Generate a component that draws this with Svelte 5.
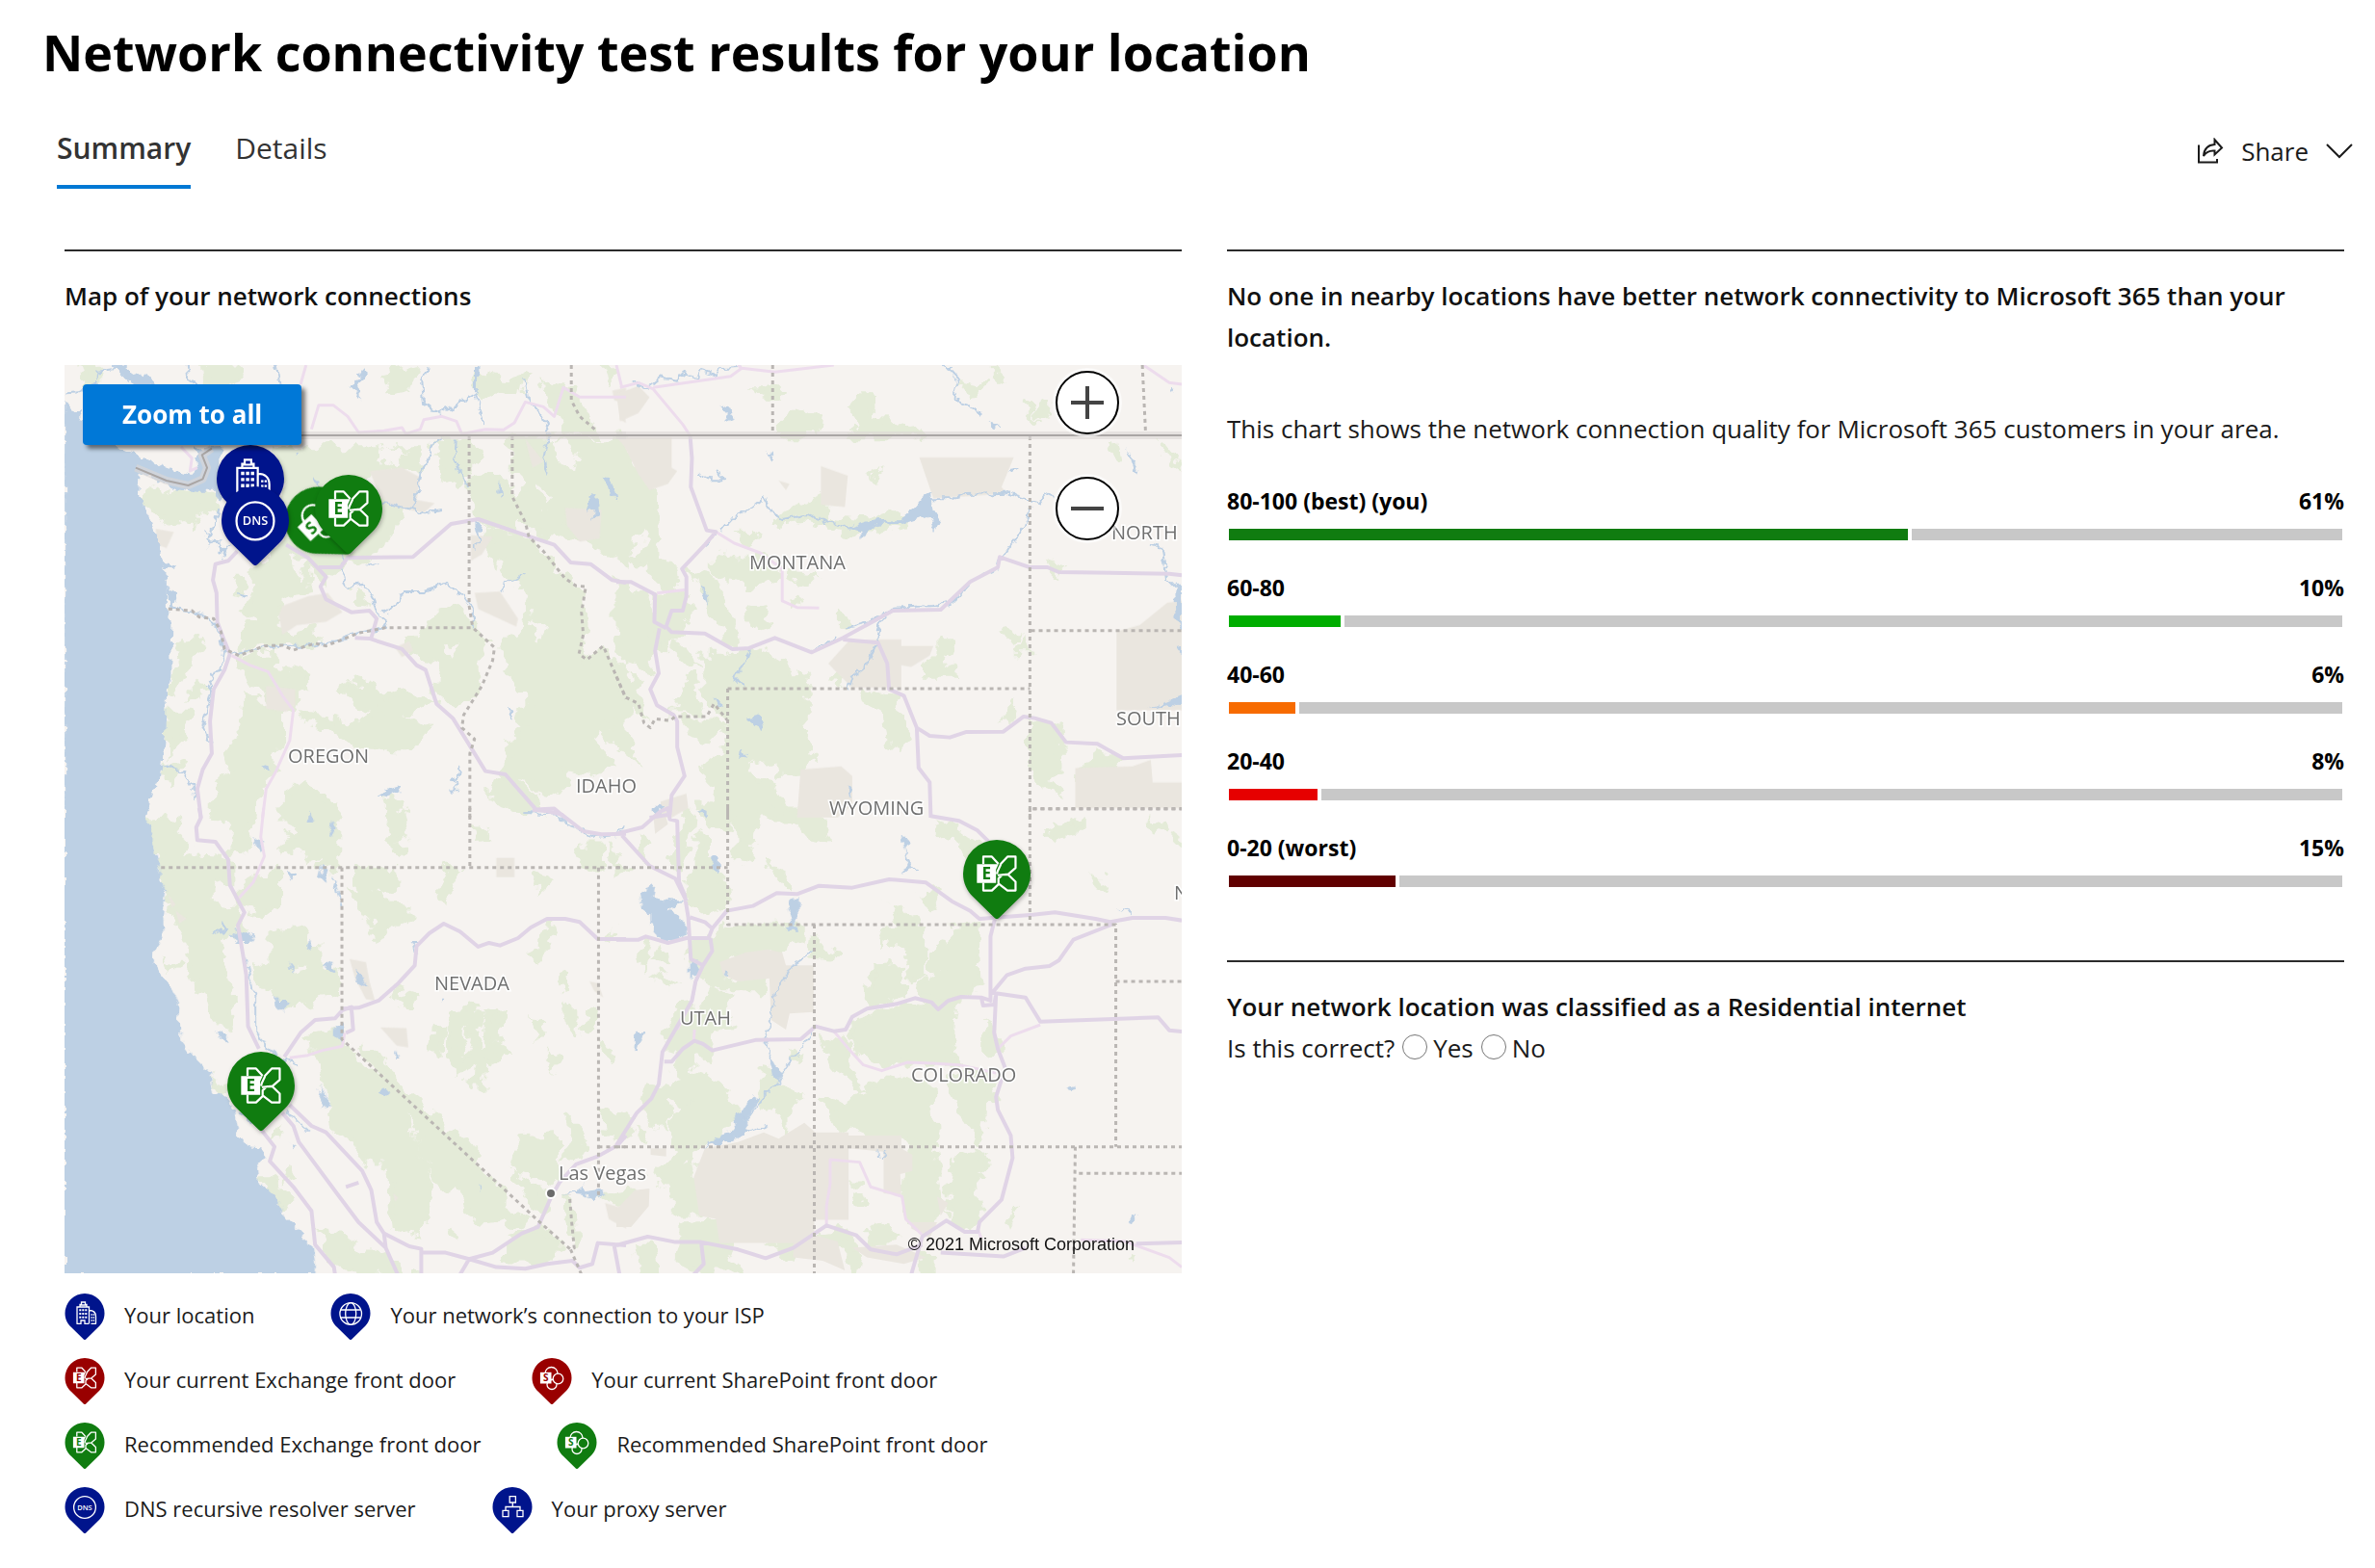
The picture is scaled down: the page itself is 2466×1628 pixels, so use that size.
<script>
  const buckets = [
    { label: '80-100 (best) (you)', value: 61, color: '#107c10' },
    { label: '60-80', value: 10, color: '#00ad00' },
    { label: '40-60', value: 6, color: '#f76b00' },
    { label: '20-40', value: 8, color: '#e60000' },
    { label: '0-20 (worst)', value: 15, color: '#610000' },
  ];

  const blue = '#00148c';
  const red = '#990000';
  const green = '#107c10';

  const legend = [
    [
      { kind: 'building', color: blue, text: 'Your location' },
      { kind: 'globe', color: blue, text: 'Your network’s connection to your ISP' },
    ],
    [
      { kind: 'exchange', color: red, text: 'Your current Exchange front door' },
      { kind: 'sharepoint', color: red, text: 'Your current SharePoint front door' },
    ],
    [
      { kind: 'exchange', color: green, text: 'Recommended Exchange front door' },
      { kind: 'sharepoint', color: green, text: 'Recommended SharePoint front door' },
    ],
    [
      { kind: 'dns', color: blue, text: 'DNS recursive resolver server' },
      { kind: 'proxy', color: blue, text: 'Your proxy server' },
    ],
  ];

  // x, y is the point on the map that the tip of the pin marks
  const pins = [
    { kind: 'sharepoint', color: green, x: 295, y: 195, turn: -43 },
    { kind: 'exchange', color: green, x: 295, y: 195, turn: 0 },
    { kind: 'building', color: blue, x: 193, y: 164, turn: 0 },
    { kind: 'dns', color: blue, x: 198, y: 207, turn: 0 },
    { kind: 'exchange', color: green, x: 204, y: 794, turn: 0 },
    { kind: 'exchange', color: green, x: 968, y: 574, turn: 0 },
  ];

  const places = [
    { name: 'MONTANA', x: 711, y: 212 },
    { name: 'NORTH', x: 1087, y: 181 },
    { name: 'SOUTH', x: 1092, y: 374 },
    { name: 'OREGON', x: 232, y: 413 },
    { name: 'IDAHO', x: 531, y: 444 },
    { name: 'WYOMING', x: 794, y: 467 },
    { name: 'NEVADA', x: 384, y: 649 },
    { name: 'UTAH', x: 639, y: 685 },
    { name: 'COLORADO', x: 879, y: 744 },
    { name: 'N', x: 1152, y: 555 },
    { name: 'Las Vegas', x: 513, y: 846 },
  ];

  // Each tile keeps its own coordinate space, placed on the map by its matrix
  const tiles = [
    {
      matrix: 'matrix(0.3763 0 0 0.3333 -7 -10)',
      woods: [
        'M65 40H110L100 90L80 100ZM395 30H490L500 70L450 90L400 80ZM250 420L290 430L350 415L440 440L445 490L400 480L380 520L330 500L320 530L270 500L245 440Z',
        'M600 290H1000L1000 350L860 360L850 400L900 450L960 460L880 620L800 640L740 700L690 650L680 740L610 760L600 830L640 870L700 850L720 880L640 905L560 900L500 930L515 860L560 820L520 790L550 740L545 660L620 600L630 400Z',
        'M490 700L512 700L512 730L485 725ZM820 735L855 770L810 760ZM350 890L390 890L370 950L340 1000L310 1060L320 980ZM370 1040L400 1045L360 1070ZM300 1120L370 1120L350 1180L310 1230L300 1160ZM300 1260L340 1280L310 1320Z',
        'M500 940L600 930L590 970L640 980L690 990L690 1030L660 1050L650 1100L600 1110L560 1030L520 1020ZM520 1070L610 1110L610 1200L590 1220L600 1290L560 1340L540 1440L430 1440L440 1330L480 1270L470 1200L510 1170Z',
        'M680 1120L760 1130L830 1150L880 1110L960 1130L1010 1170L980 1220L900 1220L830 1210L780 1180L700 1150ZM785 1040L850 1020L890 1040L900 1070L960 1050L1030 1080L970 1110L900 1110L840 1090ZM620 1380L680 1330L740 1390L780 1440H620ZM910 1380L940 1400L920 1440Z',
        'M940 920L1000 880L1040 800L1100 790L1140 840L1190 900L1150 970L1160 1040L1090 1090L1040 1040L1060 960L1000 930L960 900ZM1040 280L1110 280L1100 330L1130 360L1100 400L1060 380ZM1070 260L1140 260L1160 330L1120 350ZM900 60L980 40L970 100L920 110ZM1150 60L1240 80L1290 60L1280 110L1220 100L1170 140Z',
        'M1140 380L1220 370L1250 430L1280 510L1260 540L1180 520L1150 470ZM1180 600L1200 580L1190 540L1270 560L1330 600L1380 680L1440 730L1450 850L1440 930L1470 950L1500 910L1530 960L1568 1100L1568 1240L1500 1150L1480 1200L1530 1270L1480 1310L1400 1290L1410 1340L1340 1370L1290 1320L1240 1300L1250 1200L1300 1150L1270 1120L1310 1070L1240 990L1230 900L1290 850L1300 740L1230 690L1220 640Z',
        'M1250 260L1568 260L1568 660L1500 600L1450 580L1400 530L1350 570L1300 530L1270 470L1290 400L1260 350ZM1200 1320L1250 1310L1310 1370L1330 1420L1270 1410L1190 1380ZM1350 90L1420 110L1460 190L1480 240L1400 240L1370 160ZM1500 30L1540 60L1520 80Z',
      ],
      sands: [
        'M860 360L950 350L1000 380L990 450L1040 460L1010 490L920 470L890 440ZM620 780L690 750L745 740L785 800L740 830L660 840L620 870L610 810ZM270 540L320 550L300 600L275 590ZM1150 740L1220 735L1270 820L1265 845L1160 790ZM1400 475L1500 480L1495 570L1440 580L1405 530ZM1140 560L1200 565L1170 620L1140 640ZM575 1030L655 1040L655 1090L630 1110L575 1100ZM930 910L970 890L980 920L950 940ZM1530 110L1568 100L1568 150L1535 140Z',
        'M1290 260L1340 330L1310 350ZM1560 160L1568 210L1550 200Z',
      ],
      clearings: ['M1480 680L1500 660L1520 740L1510 840L1490 880L1450 900L1460 780ZM1060 900L1110 910L1080 950ZM1380 250L1440 300L1430 370L1370 330ZM1320 400L1360 440L1340 480ZM640 620L690 640L660 700ZM1300 820L1340 850L1320 900ZM900 280L960 300L930 340L890 320Z'],
      waters: [
        'M19 140L40 175L70 165L60 200L130 255L175 295L215 320L225 360L222 420L240 470L255 510L270 555L290 640L300 700L300 780L315 830L312 930L312 1000L300 1060L297 1150L290 1250L285 1310L260 1360L245 1440H19Z',
        'M160 290L200 300L260 330L300 350L365 375L390 345L378 290L450 285L450 450L430 425L390 425L330 415L290 395L225 365Z',
        'M150 30L180 30L230 70L250 60L270 90L240 95L195 80ZM1148 30H1160L1158 120L1148 110ZM845 35L850 60L828 105L835 140L812 100L825 80ZM1470 440L1485 430L1492 500L1475 515L1480 480L1460 490ZM1505 380L1525 385L1545 455L1515 415ZM285 640L325 655L300 670ZM300 720L330 745L320 780L345 800L310 790ZM850 650L885 645L870 658ZM1220 390L1225 440L1212 430ZM500 740L522 750L512 758ZM560 1285L580 1270L585 1295ZM880 1370L910 1350L940 1340L945 1360L910 1375ZM1245 1085L1255 1110L1250 1135ZM405 540L420 575L410 605L420 560ZM440 590L470 600L460 630ZM1150 520L1170 530L1160 570ZM1350 330L1352 345L1345 370L1338 350Z',
      ],
      rivers: [
        'M105 90L110 50L170 40M105 90L60 115L20 118M355 30L360 70L400 110M600 30L613 90M705 380L720 410M1060 255L1030 280L1020 330L1000 370L990 440L975 480L930 465L895 455M975 480L1010 490L1060 480M1020 40L1005 80L1010 150L1045 180L1090 160L1150 120L1180 215M1290 70L1300 140L1340 190L1355 245L1340 320L1345 360',
        'M660 300L662 310M1100 260L1095 330L1120 390L1135 410M785 615L785 690L795 720L845 710L870 760L880 800L910 830L900 850L830 865L780 885L700 905L640 905L570 905L500 930L460 920L450 870L420 815L370 800L320 790M900 800L930 780L955 735L1010 735L1075 712L1120 750L1145 790L1145 850M1225 740L1230 705L1260 700L1295 675M460 920L450 980L430 990L415 1020L425 1050L400 1150L420 1210M290 1275L350 1300L375 1350L378 1380M1110 1280L1105 1310L1085 1325L1105 1330L1100 1355L1080 1355M445 480L420 560L410 575L445 580L460 620L480 590M1160 520L1165 580L1150 600',
      ],
      pinks: ['M685 30L670 90M700 230L720 155L760 155L800 190L830 240L900 235L950 225L960 245L1000 230L1010 200L1060 190L1100 205L1115 245L1180 230L1230 232L1260 210L1290 145L1340 160L1370 190L1395 100L1440 130L1568 130M340 285L370 320L365 360L385 350M480 935L530 965L580 985L620 1060L650 1105L640 1200L600 1300L575 1350L565 1440'],
      highways: ['M495 610L470 640L435 650L428 700L438 740L440 830L460 890L475 930L460 980L430 1040L420 1140L425 1240L400 1290L385 1350L395 1440M630 590L690 630L740 690L725 720L740 760L810 800L860 795L880 820L865 880M720 660H780L800 630L980 628L1085 525L1160 510L1290 560L1370 590L1415 645L1470 650L1530 700L1568 708M820 880L860 882L950 915L990 965L1015 980L1045 1085L1090 1130L1180 1295L1235 1305L1320 1415L1370 1412L1400 1440'],
      borders: ['M305 790L370 795L390 815L430 820L450 860L460 915L500 935L570 905L620 903L650 918L710 897L740 905L830 865L905 848H1145L1205 910L1200 950L1170 1030L1120 1120L1115 1160L1150 1195L1137 1240V1440M1135 252V780L1145 848M1254 252V440L1290 520L1300 565L1340 610L1400 695L1430 718L1457 720L1445 800L1450 870L1438 930L1460 948L1505 905L1568 1070M1417 30V140L1440 190L1487 235'],
      frontiers: ['M520 249H1568M215 350L300 390L360 405L400 385L412 350L398 310L425 290'],
    },
    {
      matrix: 'matrix(0.3827 0 0 0.3333 573 -10)',
      woods: [
        'M0 255L20 280L60 380L105 430L110 630L60 650L0 600ZM85 640L160 650L165 700L150 730L110 700L90 670ZM270 625L330 635L410 640L440 680L380 720L340 710L270 680ZM470 680L540 690L520 710L480 705ZM200 670L250 680L290 760L320 850L325 900L300 890L260 780L210 700ZM360 790L400 785L410 850L380 860L355 810ZM340 560L360 545L380 560L360 575ZM690 370L710 365L705 380Z',
        'M505 460L550 440L580 480L570 510L660 520L690 530L740 510L780 490L800 500L760 525L690 545L620 545L560 525L500 510L450 515L440 550L435 510L480 490ZM440 230L490 175L550 190L540 245L440 245ZM640 230L680 235L660 200L640 170L680 120L700 130L690 200L730 210L780 205L780 230L830 225L830 245L640 245ZM380 110L450 110L440 130L400 130ZM1020 40L1045 70L1020 70ZM950 90L990 100L970 120ZM1100 150L1130 160L1135 190ZM1150 140L1170 145L1170 190L1150 180ZM1350 260L1360 320L1340 310ZM1480 260L1500 320L1534 345L1534 350L1500 320ZM0 700L80 750L100 840L90 980L30 960L0 850ZM110 760L190 740L200 800L185 850L130 910L100 900ZM165 890L210 950L180 950Z',
        'M240 940L300 940L360 920L420 940L510 1000L510 1130L520 1240L540 1260L490 1300L430 1300L420 1270L360 1270L350 1310L430 1330L460 1440L240 1440L290 1330L250 1330L240 1280L300 1230L300 1120L260 1100L240 1040ZM200 1000L230 1110L160 1110L170 1040ZM0 1130L50 1240L60 1270L0 1220ZM180 1130L290 1150L260 1190L180 1170ZM0 950L60 1030L80 1130L20 1060ZM660 1040L730 1060L790 1120L790 1180L770 1220L740 1210L730 1120L670 1080ZM870 890L910 890L890 950L915 1000L840 1000L840 960L870 940ZM1060 870L1080 860L1075 890ZM1100 880L1120 920L1090 920ZM1075 1080L1085 1110L1070 1140L1045 1130ZM1125 1140L1200 1170L1205 1300L1160 1320L1195 1360L1160 1350L1125 1300ZM1310 1240L1370 1260L1340 1300L1250 1320L1260 1285L1300 1270ZM610 800L630 810L625 850L610 840ZM590 1000L620 1000L610 1020L585 1010ZM480 760L495 770L485 785ZM1170 650L1210 660L1190 680Z',
      ],
      sands: ['M0 255H150L150 350L165 360L140 400L90 420L60 370L20 280ZM822 318H1078L1045 410L1060 430L860 445ZM555 345L628 375L620 472L555 465ZM710 885H773V905H860L850 935L800 970L773 965V1035L640 1035L600 990L575 960L630 890ZM1357 860L1420 840L1495 770L1534 765V1105L1357 1105ZM1245 1285L1400 1280L1450 1260L1455 1330H1534V1410H1245ZM500 1290L610 1280L640 1310L640 1400L600 1440H490ZM0 120L60 95L90 130L60 180L10 205ZM120 1390L190 1365L195 1410L150 1440H120ZM440 390L470 400L460 420Z'],
      clearings: ['M360 1280L400 1265L420 1290L390 1300ZM30 620L80 600L80 560L50 590Z'],
      waters: ['M830 440L855 425L860 480L878 515L865 550L850 500L830 505L790 520L720 525L690 535L665 580L665 545L620 540L690 515L770 510L800 480ZM280 155L310 170L325 195L295 210L305 185ZM355 1130L390 1120L400 1170L375 1155ZM340 1220L355 1250L335 1258ZM230 715L245 745L248 780L232 750ZM265 1065L295 1095L275 1090ZM630 1340L645 1350L635 1380ZM405 290L432 325L425 333ZM1060 355L1090 350L1080 362ZM95 1420L115 1400L125 1425L110 1435ZM230 1415L245 1430L240 1440ZM1490 1080L1534 1060V1090L1500 1085L1440 1100ZM1385 290L1415 350L1412 375ZM1500 98L1516 103L1507 115ZM1510 910L1534 905V930ZM885 30L912 30L908 45ZM1515 710H1534V860L1520 820ZM1010 210L1040 220L1025 228Z'],
      rivers: ['M280 550L320 500L350 490L400 445L420 490L450 510L520 495L570 520L660 545M855 445L920 445L950 432L1060 428L1145 460L1165 430L1185 440M1125 470L1105 540L1075 580L1040 640L1035 665L960 705L910 770L860 780L750 785L730 810L715 830L705 900L680 965L640 1000L630 1040M620 850L690 830L730 800M360 920L345 965L320 1000L345 1035M905 40L925 65L912 120L940 155L965 165L985 180M340 35L280 40L270 60L230 45L220 70L175 55L165 80L120 70L80 105L40 75M1450 590L1480 600L1495 700L1530 740M225 370L250 385L290 385L280 360M240 590L270 560M530 920L600 880'],
      pinks: ['M10 100L60 85L100 105L180 215L200 250M100 100L310 65L340 40L430 52L590 30M340 40L330 30M0 30L15 100M1430 30L1500 85L1534 90M270 550L320 585L390 615L450 665V765L490 785L550 787M190 730L110 740'],
      highways: ['M200 250L205 320L202 410L245 545L270 550L240 590L178 665L190 690V750L180 795H150L135 845L150 862L240 866L315 915L360 912L430 880L530 925L615 880L750 795L880 792L960 705L1035 660L1040 628L1120 660H1170L1200 675L1500 680L1534 685M0 706H40L105 745L103 830L135 850M117 850L105 920L115 990L92 1040L110 1090L155 1120L165 1140V1220L185 1310L150 1370L145 1430L90 1440M615 885L710 895L735 960L740 1040L780 1060L815 1160L850 1185L905 1190L950 1173L1050 1172L1105 1125L1135 1130L1180 1145L1220 1205L1305 1210L1375 1255L1534 1245M815 1160L820 1285L850 1330L853 1440'],
      borders: ['M424 30V245M1427 30L1436 245M1122 252V1440M1125 857H1534M302 1038H1122M302 1038V1440M1130 1412H1534M0 1000L25 1065L60 1085L75 1145L92 1160L105 1132L145 1138L160 1125H245L265 1085L300 1135'],
      frontiers: ['M0 249H1534'],
    },
    {
      matrix: 'matrix(0.3763 0 0 0.3333 -7 460)',
      woods: [
        'M260 35L325 32L330 80L365 110L340 140L340 175H280L265 110ZM280 190L370 155L470 160L470 240L420 250L430 300L490 310L510 370L440 400L450 460L470 520L480 690L430 660L410 580L370 540L355 470L360 420L330 350L310 270L290 240ZM430 0H540L520 60L515 130L485 135L490 50L420 40ZM620 0H770L770 185H720L730 130L690 160L680 130L630 140L620 110L660 50ZM910 0H940L960 80L930 130Z',
        'M500 260L530 230L610 195L610 300L560 320L500 300ZM590 390L680 375L700 450L720 440L720 490L770 520L775 570L700 600L620 620L590 600L600 550L550 540L540 500L590 480ZM820 190H935V250H850L820 220ZM805 260L870 260L900 290L970 295L970 330L930 370L870 405L865 350L830 290ZM1070 180L1105 195L1060 295L1050 280ZM1150 60L1200 80L1160 85ZM1440 120L1500 120L1500 180H1455ZM1530 120L1550 130L1530 190ZM1330 210L1360 220L1325 250ZM1360 360L1370 390L1330 440L1325 475L1310 460ZM1510 400L1540 380L1520 410Z',
        'M685 715L785 690L780 740L700 750ZM710 765L800 750L840 800L900 870L960 900L980 980L1000 1070L1030 1180L1010 1270L1000 1320L930 1310L920 1150L900 1110L870 1110L830 1040L760 1000L740 900L730 800ZM850 760L910 790L950 880L1040 960L1110 1040L1155 1060L1150 1120L1200 1160L1220 1210L1220 1280L1150 1285L1110 1190L1050 1170L1000 1050L970 950L900 850ZM1130 610L1155 620L1100 750L1130 810L1070 760L1070 690ZM1150 650L1175 650L1150 780L1140 870L1175 870L1180 780L1240 765L1210 720L1220 650L1190 640L1185 740L1120 810ZM940 570L985 590L965 635ZM1040 680L1055 690L1045 750L1030 750Z',
        'M1320 660L1340 670L1330 720ZM1400 620L1430 650L1420 710ZM1470 620L1480 670L1455 680ZM1360 760L1385 770L1370 810ZM1510 750L1530 760L1520 780ZM1390 520L1405 530L1395 560ZM1268 1025L1375 1020L1375 1165L1290 1130L1268 1130ZM1260 1140L1350 1200L1340 1260L1280 1210ZM1400 950L1440 1000L1460 1060L1400 1090L1420 1030ZM1500 940L1568 960V1010L1510 1020ZM1500 1200L1568 1190V1240ZM1405 1200L1425 1280L1430 1370L1410 1300ZM1330 1310L1385 1350L1385 1410L1240 1410L1240 1340ZM1210 1260L1300 1280L1270 1310ZM730 1320L770 1330L820 1380L870 1380L960 1440L980 1453H860L810 1440L760 1410ZM560 1160L600 1160L650 1220L620 1240ZM590 1020L615 1000L620 1030ZM640 1130L650 1150L635 1155ZM1080 1310L1120 1350L1090 1340ZM300 480L325 490L310 500ZM300 290L320 340L300 320ZM430 840L480 890L440 880Z',
      ],
      sands: ['M805 470L850 480L860 540L875 600L850 595L820 530ZM890 683L962 685L967 745L935 740ZM1210 155H1260V215H1210ZM1467 540L1490 545L1505 590L1480 570ZM1510 1230L1568 1250V1310L1520 1280ZM325 320L355 345L335 360ZM305 270L325 300L315 310ZM925 1200L940 1215L930 1225Z'],
      clearings: ['M960 950L980 980L1000 1070L1030 1180L1010 1110L985 1010ZM430 250L470 270L480 310L430 290ZM640 480L680 485L660 510Z'],
      waters: [
        'M19 0H252L243 35L260 80L265 120L282 185L280 225L298 260L290 340L295 390L280 420L268 440L262 480L285 520L315 560L335 610L330 650L345 730L380 780L420 825L428 880L470 905L487 940L497 1020L525 1055L555 1060L570 1090L550 1120L555 1165L600 1215L630 1280L680 1330L680 1350L703 1360L710 1420L708 1453H19Z',
        'M820 500L840 520L850 565L825 545ZM765 680L788 675L785 725L765 710ZM733 165L745 180L735 230L722 215ZM755 40L768 60L757 85L750 70ZM695 10L705 45L690 45ZM535 90L570 110L555 135ZM635 200L660 205L645 225ZM760 215L772 240L765 255L755 245ZM725 490L755 475L765 515L740 505ZM440 695L465 705L472 735L445 715ZM455 350L470 375L455 400L430 385L455 380ZM490 375L540 400L530 420L500 420L480 400ZM600 580L615 600L640 600L620 635L605 620ZM690 410L705 425L688 440ZM880 885L900 870L915 885L900 900ZM728 860L738 900L752 920L738 940L715 880L728 890ZM935 745L942 780L930 780ZM640 1040L660 1050L650 1060ZM500 945L545 970L530 990ZM1395 1200L1430 1195L1450 1165L1455 1195L1500 1185L1515 1205L1480 1225L1450 1205ZM635 480L655 510L640 500ZM1062 590L1070 590L1062 612ZM1160 1170L1166 1180L1162 1195Z',
      ],
      rivers: ['M515 460L530 520L545 590L545 680L570 740L620 780L660 800M770 250L780 300M985 455L980 420L1000 420M1290 15L1380 20L1400 50L1450 70L1480 90L1540 85L1560 70M630 940L690 1010'],
      pinks: ['M568 0L560 90L570 150L540 230L500 280M640 778L690 770L730 755L785 742L792 700M1568 1020L1545 1050L1490 1085L1430 1110'],
      highways: ['M390 0L395 30L382 60L385 100L435 105L470 160L475 240L515 325L497 365L510 450L520 520L525 680L555 750M625 775L670 700L710 660L765 655L785 630L810 620L815 690L795 700M785 625L830 622L885 600L940 545L985 490L990 430L1025 390L1065 360L1110 385L1160 432L1190 420L1220 428L1270 405L1305 372L1350 345H1400L1440 355L1490 408H1568M1310 5L1350 10L1390 20L1450 72L1500 82L1568 80M560 1000L598 1055L585 1100L650 1180L700 1255L710 1360L762 1430L765 1453M620 950L650 990L665 1040L770 1200L830 1290L905 1370L938 1453M640 925L700 990L740 1010L840 1130L865 1190L880 1290L900 1325L970 1365L1003 1373L1003 1453M900 1325L905 1370M1003 1385L1070 1385L1135 1405L1200 1385L1280 1325L1325 1305L1362 1210L1385 1165L1430 1110L1490 1085L1545 1050L1568 1020M1110 1453L1135 1405L1210 1430L1290 1435L1350 1420L1420 1410L1440 1432L1475 1420L1490 1355L1568 1362M1535 1362L1550 1453M795 1180L830 1167'],
      borders: ['M285 185H1568M1137 0V185M784 185V720L1330 1290L1415 1375L1425 1370L1418 1290L1412 1205M1492 185V1205M1492 1055H1568M1415 1375L1445 1453'],
      frontiers: [],
    },
    {
      matrix: 'matrix(0.3827 0 0 0.3333 573 460)',
      woods: [
        'M320 0H390L370 60L360 165L325 150ZM230 0H300L300 60L240 50ZM430 0H530L575 50L570 95L520 85L490 40ZM180 10L200 20L190 130L170 180L150 170L170 100ZM225 80L260 100L260 200L300 230L290 310L240 320L195 280L190 220L225 190ZM60 90L80 100L75 155L55 140ZM0 190L30 195L0 210Z',
        'M290 370L510 370L510 410L460 430L430 445L330 460L280 500L300 540L410 530L400 560L340 560L270 560L240 520L210 480L200 430L260 400ZM90 410L75 480L65 450ZM120 440L135 480L100 470ZM115 525L155 540L130 550ZM170 620L230 610L260 570L310 590L290 640L310 680L260 700L240 780L180 760L150 750L140 700ZM150 860L180 850L250 830L300 880L330 980L240 1040L190 1090L240 1260L160 1260L160 1180L110 1160L120 1110L180 1080L150 1040L150 960L190 920L150 900ZM90 870L140 880L130 990L75 940ZM170 770L200 770L190 840L165 830ZM0 950L40 960L30 1020L0 1040ZM400 810L440 820L450 870L500 890L480 930L460 950L460 1020L430 950L400 910ZM60 990L90 1000L80 1045L60 1030Z',
        'M825 270L880 265L870 310L850 320ZM740 310L770 300L800 350L830 370L830 530L800 540L790 420L720 410L730 380H770ZM880 60L950 90L1000 130L990 200L930 110L890 80ZM910 370L980 365L985 550L930 590L900 600L820 590L830 550L880 510L850 500L850 450L870 420L910 430ZM695 495L775 490L775 580L720 605L675 590L675 560L695 555ZM540 390L550 450L600 460L580 465L530 460ZM640 670L720 640L840 600L920 600L910 720L920 790L850 800L790 780L740 800L700 780L640 740ZM560 720L620 730L640 830L660 860L600 830ZM480 750L500 770L480 790ZM900 830L960 820L1010 830L1030 900L1000 930L990 1040L940 970L920 920Z',
        'M560 900L640 920L680 870L780 830L850 870L860 1020L850 1060L790 1040L770 1020L680 1020L600 980L570 930ZM790 1050L860 1080L880 1200L890 1260L840 1310L800 1280L780 1180ZM920 1090L980 1070L1010 1100L970 1160L980 1260L960 1310L910 1280L900 1190ZM180 1295L270 1290L280 1360L300 1360L330 1440H200L170 1400L180 1340ZM60 1360L100 1360L110 1453L70 1440ZM430 1360L480 1360L470 1400ZM560 1330L620 1320L660 1380L650 1440L610 1380ZM680 1320L730 1300L750 1340L700 1370ZM640 1170L670 1170L640 1180ZM650 1210L680 1225L660 1220ZM1000 680L1030 700L1030 760L1000 740ZM1175 70L1255 40L1255 70L1190 85ZM1450 40L1490 45L1490 70L1455 65ZM1510 80L1534 90V105ZM1300 220L1340 235L1335 245L1305 235ZM420 180L450 200L460 240L440 220ZM820 1400L860 1400L860 1453L830 1453ZM1060 1285L1078 1272L1065 1300ZM1400 1400L1412 1412Z',
      ],
      sands: ['M280 480L350 450L410 440L450 450L460 490L535 490L535 635L470 640L460 690L420 660L415 530L330 540L290 520ZM240 1060L330 1040L400 1010L440 1030L510 980L540 1010H630V1020H773V1060L803 1080V1130L770 1140L773 1205L725 1200V1070L630 1060V1283H537V1330L600 1350L620 1440L560 1410L480 1400L480 1355H280L270 1280L225 1270L210 1150ZM0 1250L50 1190L90 1185L88 1240L40 1305H0ZM100 20L130 10L140 50L105 80ZM495 0H600L550 25ZM93 1060L135 1060L135 1085L93 1080ZM800 1290L870 1290L850 1340L800 1310ZM870 1210L900 1230L880 1270ZM640 1370L760 1360L840 1400L780 1420L680 1400Z'],
      clearings: ['M320 480L350 490L340 515L310 510Z'],
      waters: ['M65 260L90 240L105 250L100 280L150 290L180 290L140 320L165 330L195 375L180 405L150 415L105 400L108 370L92 365V325L70 315ZM470 290L495 280L495 345L482 370L495 380L460 380L475 360L462 310ZM775 90L795 95L785 125L800 185L775 210L790 170ZM262 150L275 155L280 185L270 210L262 180ZM200 480L218 475L222 515L200 535ZM50 698L74 700L58 755L48 760ZM290 505L305 510L298 525ZM320 960L340 950L370 895L385 905L350 975L355 1010L300 1040L235 1055L280 1020L325 1005ZM415 770L430 800L450 820L440 850L425 830ZM1360 310L1395 318V328ZM1218 872L1240 865L1253 875L1235 880ZM1400 1265L1415 1270L1395 1300L1390 1290ZM708 1060L712 1090L705 1085ZM95 0H130L100 25ZM225 5L245 15L240 35Z'],
      rivers: ['M535 445L480 490L430 580L420 650L405 720L420 790L440 850L400 900L345 980M540 690L510 740L470 790L440 840M340 1015L410 995M725 1070L735 1075L720 1095M0 70L20 60M140 285L180 290M780 190L820 185'],
      pinks: ['M210 725L212 690M235 490L215 540L205 600L165 690M590 695L630 750L670 800L720 818L790 792L860 795L930 800L1030 825M1150 675L1070 710L1035 750M570 1300V1240L580 1170V1095L660 1103L690 1180L775 1210L785 1280L830 1330M980 1310L990 1340M1260 1345L1380 1350L1500 1400L1534 1430'],
      highways: ['M0 80L70 60L120 10L140 0L145 35L165 40L170 230L185 270L195 340L202 470L235 490M15 85L90 180L160 220L190 290M200 340L240 355L260 375L300 320L370 305L435 265L490 268L550 242L640 248L740 222L840 232L910 290L960 320L985 345L1130 332L1190 325L1300 345L1340 355L1400 342H1490L1534 350M0 410H60L80 400L140 420L190 405H250L262 370M255 405L260 445L235 490L215 540L205 600L125 760L115 860L95 905L55 950L0 1050M130 790L150 790L180 750L212 725L235 735L260 755L380 722L500 720L540 680L590 695L622 690L640 650L680 625L760 610L810 592L855 605L873 627L900 600L935 588L990 590L1015 600L1015 400L1028 340M853 25L930 40L980 70L1015 110M1350 360L1240 410L1200 475L1175 492L1110 500L1060 520L1020 575L1110 590L1150 665L1470 652L1500 692L1534 696M990 590L995 615L1025 612L1030 580L1025 700L1035 750L1055 810L1030 900L1035 940L1070 1020L1075 1090L1045 1220L985 1290L980 1320L945 1320L895 1285L830 1335L800 1453M0 1362L85 1335L160 1352L230 1352L330 1375L405 1402L480 1370L570 1300L650 1330L690 1375L760 1390L830 1360M230 1352L237 1420L210 1453M880 1385L1050 1397L1110 1370M1410 1357L1534 1353'],
      borders: ['M302 0V363H1355V1055M0 185H302M537 363V1453M0 1055H1534M1122 0V363M1130 3H1534M1355 540H1534M1245 1055L1240 1453M1255 1138H1534'],
      frontiers: [],
    },
  ];
</script>

{#snippet pin(kind, color, x, y, width, height)}
  <svg class="pin" viewBox="0 0 41 48" {x} {y} {width} {height} fill="none" stroke="#fff" stroke-width="1.3" aria-hidden="true">
    <path
      d="M20.5 0A20.5 20.5 0 0 1 41 20.5C41 26.5 38.5 31 35 34.6L22 47.3a2.1 2.1 0 0 1-3 0L6 34.6C2.5 31 0 26.5 0 20.5A20.5 20.5 0 0 1 20.5 0Z"
      fill={color}
      stroke="none"
    />
    {#if kind === 'building'}
      <path d="M12.5 31.5V14h3v-2.500h1.500V9h4v2.500h1.500V14h2.500v17.500M15.500 14h8M12 31.300h4.500V28h4v3.300h4M25 17.500c4.500 0 7 2.500 7 6.500v7.500M27 31.300h5.500M15 12h7.500" />
      <path d="M14.800 17.300h8M14.800 21h8M14.800 24.700h8" stroke-width="2" stroke-dasharray="2 1" />
      <path d="M27 22h3.500M27 25h3.500M27 28h3.500" stroke-dasharray="1.400 0.700" />
    {:else if kind === 'globe'}
      <circle cx="20.700" cy="21" r="11.300" />
      <ellipse cx="20.700" cy="21" rx="5.500" ry="11.300" />
      <path d="M10.500 17h20.500M10.500 25h20.500" />
    {:else if kind === 'exchange'}
      <path d="M12.300 14.600V10.200H17.500L21.500 14.600M12.300 26V30.800H17.500L21.500 27M20.500 20.800C21 18 22.500 16.500 23 14.500L27 10.200H31.900V17L27.500 20.800L21 21.500M21.500 23.500L24 21.200L27.500 21.200L31.900 25.500V30.800H27L21.500 26.500Z" stroke-linejoin="round" />
      <path d="M8.400 14.800H21.500L20 18V26.200H8.400Z" fill="#fff" stroke="none" />
      <text x="14.200" y="24.200" fill={color} stroke="none" font-size="10" font-weight="700" text-anchor="middle">E</text>
    {:else if kind === 'sharepoint'}
      <circle cx="20" cy="16" r="6.500" />
      <circle cx="20.500" cy="27.500" r="5" />
      <circle cx="27" cy="21.500" r="5.300" fill={color} />
      <path d="M8.400 14.800H20V26.500H8.400Z" fill="#fff" stroke="none" />
      <text x="14.200" y="24.400" fill={color} stroke="none" font-size="10" font-weight="700" text-anchor="middle">S</text>
    {:else if kind === 'dns'}
      <circle cx="20.500" cy="21" r="11.400" />
      <text x="20.500" y="23.700" fill="#fff" stroke="none" font-size="7.500" font-weight="600" text-anchor="middle">DNS</text>
    {:else}
      <path d="M17.700 9.700H23.900V16H17.700ZM10.500 24.300H16.500V30.700H10.500ZM25.500 24.300H31.500V30.700H25.500ZM20.800 16V20.500M13.500 24V20.500H28.500V24" />
    {/if}
  </svg>
{/snippet}

<main>
  <h1>Network connectivity test results for your location</h1>

  <div class="bar">
    <nav aria-label="Result views">
      <a class="current" href="#summary" aria-current="page">Summary</a>
      <a href="#details">Details</a>
    </nav>
    <button class="share" type="button">
      <svg width="28" height="28" viewBox="0 0 28 28" fill="none" stroke="#1b1b1b" stroke-width="2" aria-hidden="true">
        <path d="M2 7.500V25.500H21V22" />
        <path d="M18.500 2L26 10.500L18.500 17.500V13.500C13 13 9.500 15 7 19C7.500 11.500 11.500 7.500 18.500 7Z" />
      </svg>
      <span>Share</span>
      <svg width="28" height="16" viewBox="0 0 28 16" fill="none" stroke="#1b1b1b" stroke-width="2" aria-hidden="true">
        <path d="M1 1L14 14L27 1" />
      </svg>
    </button>
  </div>

  <div class="columns">
    <section class="panel" id="summary">
      <h2>Map of your network connections</h2>
      <div class="map">
        <svg class="terrain" viewBox="0 0 1160 943" preserveAspectRatio="xMidYMid slice" role="img" aria-label="Map of the western United States">
          <defs>
            <filter id="rugged" x="0" y="0" width="100%" height="100%" filterUnits="userSpaceOnUse" color-interpolation-filters="sRGB">
              <feTurbulence type="fractalNoise" baseFrequency="0.060" numOctaves="3" seed="4" result="noise" />
              <feDisplacementMap in="SourceGraphic" in2="noise" scale="24" xChannelSelector="R" yChannelSelector="G" />
            </filter>
            <filter id="coast" x="0" y="0" width="100%" height="100%" filterUnits="userSpaceOnUse" color-interpolation-filters="sRGB">
              <feTurbulence type="fractalNoise" baseFrequency="0.120" numOctaves="2" seed="9" result="noise" />
              <feDisplacementMap in="SourceGraphic" in2="noise" scale="10" xChannelSelector="R" yChannelSelector="G" />
            </filter>
          </defs>
          <rect width="1160" height="943" fill="#f6f3f0" />
          <g filter="url(#rugged)">
            {#each tiles as tile}
              <g transform={tile.matrix}>
                {#each tile.woods as d}<path class="wood" {d} />{/each}
                {#each tile.clearings as d}<path class="clearing" {d} />{/each}
              </g>
            {/each}
          </g>
          {#each tiles as tile}
            <g transform={tile.matrix}>
              {#each tile.sands as d}<path class="sand" {d} />{/each}
            </g>
          {/each}
          <g filter="url(#coast)">
            {#each tiles as tile}
              <g transform={tile.matrix}>
                {#each tile.waters as d}<path class="water" {d} />{/each}
                {#each tile.rivers as d}<path class="line river" {d} />{/each}
              </g>
            {/each}
          </g>
          {#each tiles as tile}
            <g transform={tile.matrix}>
              {#each tile.pinks as d}<path class="line pink" {d} />{/each}
              {#each tile.highways as d}<path class="line highway" {d} />{/each}
              {#each tile.borders as d}<path class="line border" {d} />{/each}
              {#each tile.frontiers as d}
                <path class="line glow" {d} />
                <path class="line frontier" {d} />
              {/each}
            </g>
          {/each}
          <circle cx="505" cy="860" r="5" fill="#6b6b6b" stroke="#fff" stroke-width="2" />
          {#each places as place}
            <text class="place" x={place.x} y={place.y}>{place.name}</text>
          {/each}
          {#each pins as p}
            <g class="marker" transform="rotate({p.turn} {p.x} {p.y})">
              {@render pin(p.kind, p.color, p.x - 35, p.y - 81, 70, 82)}
            </g>
          {/each}
        </svg>
        <button class="zoom-all" type="button">Zoom to all</button>
        <div class="zooms">
          <button type="button" aria-label="Zoom in">
            <svg width="36" height="36" viewBox="0 0 36 36" stroke="#444" stroke-width="4" aria-hidden="true"><path d="M1 18H35M18 1V35" /></svg>
          </button>
          <button type="button" aria-label="Zoom out">
            <svg width="36" height="36" viewBox="0 0 36 36" stroke="#444" stroke-width="4" aria-hidden="true"><path d="M1 18H35" /></svg>
          </button>
        </div>
        <small>© 2021 Microsoft Corporation</small>
      </div>
      <ul class="legend">
        {#each legend as row}
          <li>
            {#each row as item}
              <span class="key">
                {@render pin(item.kind, item.color, 0, 0, 42, 48)}
                <span class="name">{item.text}</span>
              </span>
            {/each}
          </li>
        {/each}
      </ul>
    </section>

    <div class="side">
      <section class="panel quality">
        <h2>No one in nearby locations have better network connectivity to Microsoft 365 than your location.</h2>
        <p>This chart shows the network connection quality for Microsoft 365 customers in your area.</p>
        <div class="chart">
          {#each buckets as bucket}
            <div class="bucket">
              <div class="caption"><span>{bucket.label}</span><span>{bucket.value}%</span></div>
              <div class="track">
                <div class="fill" style="width: {bucket.value}%; background: {bucket.color}"></div>
                <div class="rest"></div>
              </div>
            </div>
          {/each}
        </div>
      </section>
      <section class="panel classified">
        <h2>Your network location was classified as a Residential internet</h2>
        <div class="answer" role="radiogroup" aria-labelledby="question">
          <span id="question">Is this correct?</span>
          <label><input type="radio" name="correct" value="yes" />Yes</label>
          <label><input type="radio" name="correct" value="no" />No</label>
        </div>
      </section>
    </div>
  </div>
</main>

<style>
  :global(body) {
    margin: 0;
    background: #fff;
  }
  main {
    box-sizing: border-box;
    padding: 16px 20px 24px 44px;
    color: #1b1b1b;
    font-family: 'Segoe UI', 'Open Sans', 'Noto Sans', sans-serif;
    font-size: 26px;
    line-height: 43px;
  }
  h1 {
    margin: 0;
    color: #000;
    font-size: 52px;
    font-weight: 700;
    line-height: 76px;
  }
  .bar {
    display: flex;
    justify-content: space-between;
    align-items: center;
    margin-top: 30px;
    padding-right: 3px;
    padding-left: 15px;
  }
  nav {
    display: flex;
    gap: 46px;
  }
  nav a {
    padding: 8px 0 14px;
    border-bottom: 4px solid transparent;
    color: #333;
    font-size: 30px;
    line-height: 48px;
    text-decoration: none;
  }
  nav .current {
    border-color: #0078d4;
    font-weight: 600;
  }
  .share {
    display: flex;
    align-items: center;
    gap: 18px;
    padding: 0 0 4px;
    border: 0;
    background: none;
    color: #1b1b1b;
    font: inherit;
  }
  .columns {
    display: grid;
    grid-template-columns: 1fr 1fr;
    gap: 47px;
    margin-top: 63px;
    padding: 0 12px 0 23px;
  }
  .panel {
    border-top: 2px solid #2b2b2b;
    padding-top: 25px;
  }
  h2 {
    margin: 0;
    color: #111;
    font-size: 26px;
    font-weight: 600;
    line-height: 43px;
  }
  .map {
    position: relative;
    margin-top: 50px;
    overflow: hidden;
  }
  .terrain {
    display: block;
    width: 100%;
    height: auto;
  }
  .wood {
    fill: #e4ebd8;
    stroke: #e4ebd8;
    stroke-width: 5px;
    vector-effect: non-scaling-stroke;
  }
  .clearing { fill: #f6f3f0; }
  .sand { fill: #eae6df; }
  .water { fill: #bdd0e4; }
  .line {
    fill: none;
    vector-effect: non-scaling-stroke;
    stroke-linejoin: round;
  }
  .river {
    stroke: #bdd0e4;
    stroke-width: 2px;
  }
  .pink {
    stroke: #eddced;
    stroke-width: 3px;
  }
  .highway {
    stroke: #e0d4e6;
    stroke-width: 4px;
  }
  .border {
    stroke: #bab6b3;
    stroke-width: 3px;
    stroke-dasharray: 4 4;
  }
  .glow {
    stroke: #dcd8d6;
    stroke-width: 8px;
    opacity: 0.6;
  }
  .frontier {
    stroke: #aaa6a5;
    stroke-width: 2px;
  }
  .place {
    fill: #6f6f6f;
    stroke: #fff;
    stroke-width: 3px;
    paint-order: stroke;
    font-size: 20px;
  }
  .marker {
    filter: drop-shadow(1px 2px 2px rgba(0, 0, 0, 0.3));
  }
  .pin {
    flex: none;
  }
  .zoom-all {
    position: absolute;
    top: 20px;
    left: 19px;
    padding: 10px 41px;
    border: 0;
    border-radius: 4px;
    background: #0078d7;
    box-shadow: 4px 4px 4px rgba(0, 0, 0, 0.5);
    color: #fff;
    font: inherit;
    font-weight: 700;
  }
  .zooms {
    position: absolute;
    top: 6px;
    right: 65px;
    display: grid;
    gap: 44px;
  }
  .zooms button {
    display: grid;
    place-items: center;
    width: 66px;
    height: 66px;
    padding: 0;
    border: 2px solid #000;
    border-radius: 50%;
    background: #fff;
    box-shadow: 0 0 0 3px rgba(255, 255, 255, 0.6);
  }
  small {
    position: absolute;
    right: 49px;
    bottom: 18px;
    color: #111;
    font-family: 'Liberation Sans', Arial, sans-serif;
    font-size: 18px;
    line-height: 24px;
  }
  .legend {
    display: grid;
    gap: 19px;
    margin: 21px 0 0;
    padding: 0;
    list-style: none;
    font-size: 22px;
    line-height: 44px;
  }
  .legend li {
    display: flex;
    gap: 79px;
  }
  .key {
    display: flex;
    gap: 20px;
    height: 48px;
  }
  p {
    margin: 52px 0 0;
  }
  .chart {
    display: grid;
    gap: 34px;
    margin-top: 38px;
  }
  .caption {
    display: flex;
    justify-content: space-between;
    color: #000;
    font-size: 23px;
    font-weight: 700;
    line-height: 30px;
  }
  .track {
    display: flex;
    gap: 4px;
    margin: 14px 2px 0;
  }
  .fill,
  .rest {
    height: 12px;
  }
  .rest {
    flex: 1;
    background: #c8c8c8;
  }
  .classified {
    margin-top: 76px;
  }
  .answer {
    display: flex;
    align-items: center;
    gap: 8px;
  }
  label {
    display: flex;
    align-items: center;
    gap: 6px;
  }
  input {
    width: 26px;
    height: 26px;
    margin: 0 0 4px;
  }
</style>
